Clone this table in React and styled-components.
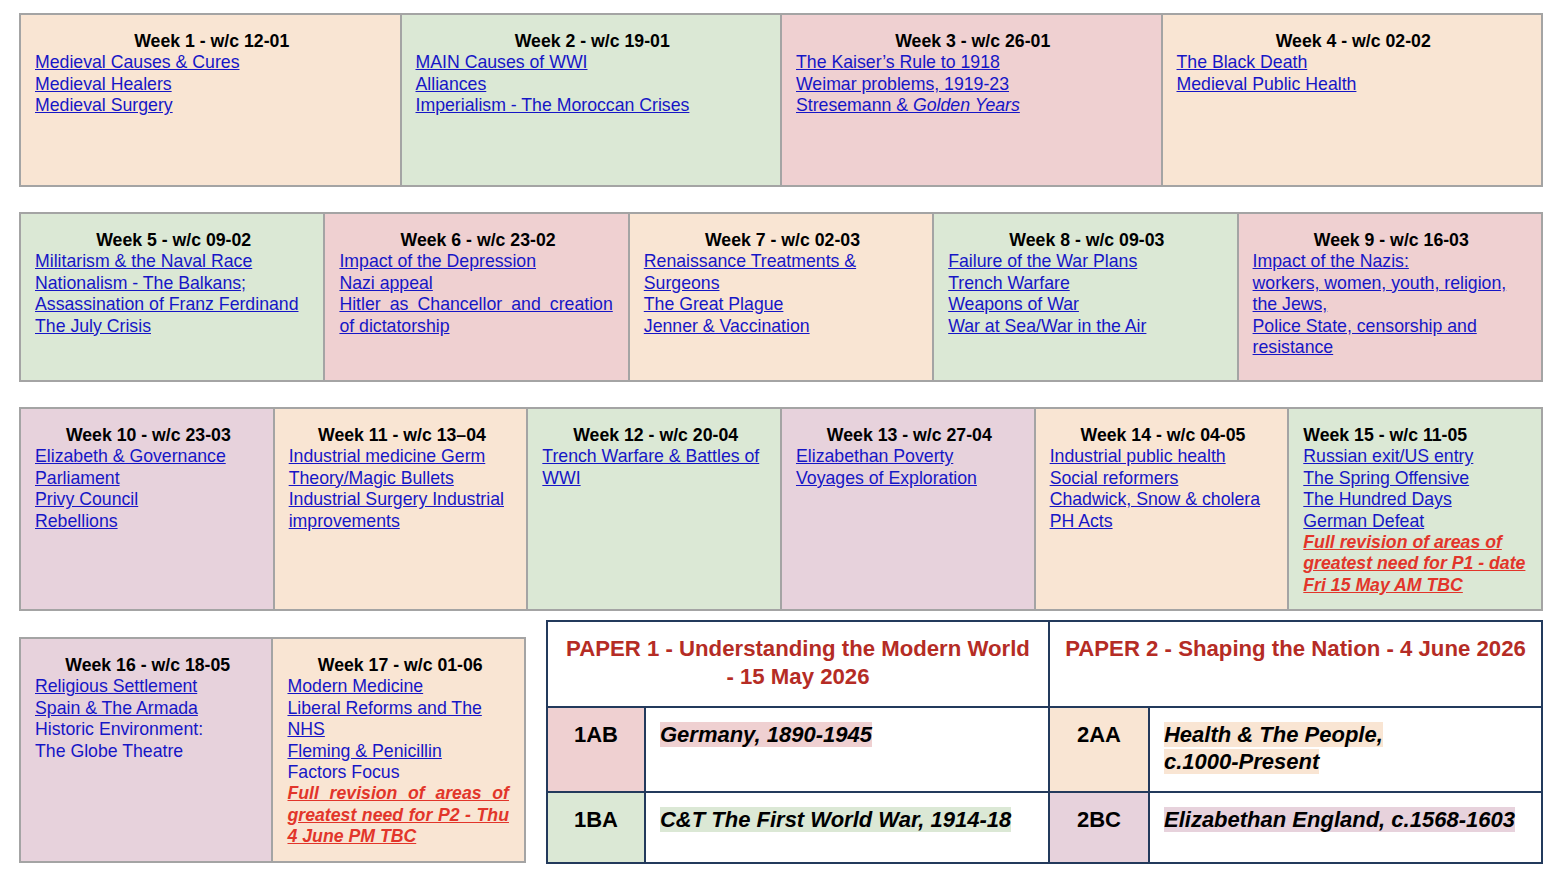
import React from "react";
import styled, { createGlobalStyle } from "styled-components";

const colours = {
  peach: "#f9e5d3",
  green: "#dbe8d5",
  pink: "#efd0d1",
  purple: "#e7d2dc",
  white: "#ffffff"
};

const GlobalStyle = createGlobalStyle`
  body {
    margin: 0;
    background: #ffffff;
    font-family: "Liberation Sans", Arial, sans-serif;
  }
`;

const Page = styled.div`
  width: 1524px;
  padding: 13px 0 0 19px;
`;

const WeekTable = styled.table`
  width: 100%;
  height: ${(p) => p.$height}px;
  border-collapse: collapse;
  table-layout: fixed;
  border: 2px solid #a4a4a4;
  margin-bottom: ${(p) => (p.$after === undefined ? 25 : p.$after)}px;
`;

const WeekCell = styled.td`
  vertical-align: top;
  background: ${(p) => colours[p.$bg]};
  border: 2px solid #a4a4a4;
  padding: 16px 11px 10px 14px;
  font-size: 17.7px;
  line-height: 21.4px;
`;

const Heading = styled.div`
  font-weight: bold;
  color: #000000;
  text-align: ${(p) => p.$align || "center"};
`;

const Topic = styled.a`
  display: block;
  color: ${(p) => (p.$alert ? "#e2352a" : "#1616c6")};
  text-decoration: ${(p) => (p.$plain ? "none" : "underline")};
  font-weight: ${(p) => (p.$alert ? "bold" : "normal")};
  font-style: ${(p) => (p.$alert ? "italic" : "normal")};
  text-align: ${(p) => (p.$justify ? "justify" : "left")};
  padding-right: ${(p) => (p.$justify ? 4 : 0)}px;
  cursor: pointer;
`;

const BottomRow = styled.div`
  display: flex;
  align-items: flex-end;
  gap: 20px;
`;

const SmallWeeks = styled(WeekTable)`
  width: 509px;
  margin-bottom: 1px;
`;

const PaperTable = styled.table`
  width: 995px;
  border-collapse: collapse;
  table-layout: fixed;
  border: 2px solid #233a5c;
`;

const PaperRow = styled.tr`
  height: ${(p) => p.$height}px;
`;

const PaperHead = styled.th`
  vertical-align: top;
  border: 2px solid #233a5c;
  padding: 13px 8px 0;
  color: #b52c25;
  font-size: 22.2px;
  line-height: 28px;
  font-weight: bold;
  text-align: center;
`;

const CodeCell = styled.td`
  vertical-align: top;
  border: 2px solid #233a5c;
  background: ${(p) => colours[p.$bg]};
  padding: 13px 4px 0;
  font-size: 22px;
  line-height: 27px;
  font-weight: bold;
  text-align: center;
  color: #000000;
`;

const TopicCell = styled.td`
  vertical-align: top;
  border: 2px solid #233a5c;
  padding: 13px 14px 0;
  font-size: 22px;
  line-height: 27px;
`;

const Highlight = styled.span`
  background: ${(p) => colours[p.$bg]};
  font-weight: bold;
  font-style: italic;
  color: #000000;
`;

const NoBreak = styled.span`
  white-space: nowrap;
`;

const rows = [
  {
    height: 174,
    weeks: [
      { title: "Week 1 - w/c 12-01", bg: "peach", topics: [{ text: "Medieval Causes & Cures" }, { text: "Medieval Healers" }, { text: "Medieval Surgery" }] },
      { title: "Week 2 - w/c 19-01", bg: "green", topics: [{ text: "MAIN Causes of WWI" }, { text: "Alliances" }, { text: "Imperialism - The Moroccan Crises" }] },
      {
        title: "Week 3 - w/c 26-01",
        bg: "pink",
        topics: [
          { text: "The Kaiser’s Rule to 1918" },
          { text: "Weimar problems, 1919-23" },
          { text: <>Stresemann &amp; <i>Golden Years</i></> }
        ]
      },
      { title: "Week 4 - w/c 02-02", bg: "peach", topics: [{ text: "The Black Death" }, { text: "Medieval Public Health" }] }
    ]
  },
  {
    height: 170,
    weeks: [
      {
        title: "Week 5 - w/c 09-02",
        bg: "green",
        topics: [
          { text: "Militarism & the Naval Race" },
          { text: "Nationalism - The Balkans;" },
          { text: "Assassination of Franz Ferdinand" },
          { text: "The July Crisis" }
        ]
      },
      {
        title: "Week 6 - w/c 23-02",
        bg: "pink",
        topics: [
          { text: "Impact of the Depression" },
          { text: "Nazi appeal" },
          { text: "Hitler as Chancellor and creation of dictatorship", justify: true }
        ]
      },
      {
        title: "Week 7 - w/c 02-03",
        bg: "peach",
        topics: [{ text: "Renaissance Treatments & Surgeons" }, { text: "The Great Plague" }, { text: "Jenner & Vaccination" }]
      },
      {
        title: "Week 8 - w/c 09-03",
        bg: "green",
        topics: [
          { text: "Failure of the War Plans" },
          { text: "Trench Warfare" },
          { text: "Weapons of War" },
          { text: "War at Sea/War in the Air" }
        ]
      },
      {
        title: "Week 9 - w/c 16-03",
        bg: "pink",
        topics: [
          { text: "Impact of the Nazis:" },
          { text: "workers, women, youth, religion, the Jews," },
          { text: "Police State, censorship and resistance" }
        ]
      }
    ]
  },
  {
    height: 204,
    after: 9,
    weeks: [
      {
        title: "Week 10 - w/c 23-03",
        bg: "purple",
        topics: [{ text: "Elizabeth & Governance" }, { text: "Parliament" }, { text: "Privy Council" }, { text: "Rebellions" }]
      },
      {
        title: "Week 11 - w/c 13–04",
        bg: "peach",
        topics: [{ text: "Industrial medicine Germ Theory/Magic Bullets" }, { text: "Industrial Surgery Industrial improvements" }]
      },
      { title: "Week 12 - w/c 20-04", bg: "green", topics: [{ text: "Trench Warfare & Battles of WWI" }] },
      { title: "Week 13 - w/c 27-04", bg: "purple", topics: [{ text: "Elizabethan Poverty" }, { text: "Voyages of Exploration" }] },
      {
        title: "Week 14 - w/c 04-05",
        bg: "peach",
        topics: [
          { text: "Industrial public health" },
          { text: "Social reformers" },
          { text: "Chadwick, Snow & cholera" },
          { text: "PH Acts" }
        ]
      },
      {
        title: "Week 15 - w/c 11-05",
        bg: "green",
        align: "left",
        topics: [
          { text: "Russian exit/US entry" },
          { text: "The Spring Offensive" },
          { text: "The Hundred Days" },
          { text: "German Defeat" },
          { text: "Full revision of areas of greatest need for P1 - date Fri 15 May AM TBC", alert: true }
        ]
      }
    ]
  }
];

const lastWeeks = [
  {
    title: "Week 16 - w/c 18-05",
    bg: "purple",
    topics: [
      { text: "Religious Settlement" },
      { text: "Spain & The Armada" },
      { text: "Historic Environment:", plain: true },
      { text: "The Globe Theatre", plain: true }
    ]
  },
  {
    title: "Week 17 - w/c 01-06",
    bg: "peach",
    topics: [
      { text: "Modern Medicine" },
      { text: "Liberal Reforms and The NHS" },
      { text: "Fleming & Penicillin" },
      { text: "Factors Focus", plain: true },
      { text: "Full revision of areas of greatest need for P2 - Thu 4 June PM TBC", alert: true, justify: true }
    ]
  }
];

const Week = ({ week }) => (
  <WeekCell $bg={week.bg}>
    <Heading $align={week.align}>{week.title}</Heading>
    {week.topics.map((topic, index) => (
      <Topic key={index} $plain={topic.plain} $alert={topic.alert} $justify={topic.justify}>
        {topic.text}
      </Topic>
    ))}
  </WeekCell>
);

const App = () => (
  <Page>
    <GlobalStyle />
    {rows.map((row, index) => (
      <WeekTable key={index} $height={row.height} $after={row.after}>
        <tbody>
          <tr>
            {row.weeks.map((week) => (
              <Week key={week.title} week={week} />
            ))}
          </tr>
        </tbody>
      </WeekTable>
    ))}
    <BottomRow>
      <SmallWeeks $height={226}>
        <tbody>
          <tr>
            {lastWeeks.map((week) => (
              <Week key={week.title} week={week} />
            ))}
          </tr>
        </tbody>
      </SmallWeeks>
      <PaperTable>
        <colgroup>
          <col style={{ width: 98 }} />
          <col style={{ width: 404 }} />
          <col style={{ width: 100 }} />
          <col style={{ width: 393 }} />
        </colgroup>
        <tbody>
          <PaperRow $height={86}>
            <PaperHead colSpan={2}>
              PAPER 1 - Understanding the Modern World <NoBreak>- 15 May 2026</NoBreak>
            </PaperHead>
            <PaperHead colSpan={2}>PAPER 2 - Shaping the Nation - 4 June 2026</PaperHead>
          </PaperRow>
          <PaperRow $height={85}>
            <CodeCell $bg="pink">1AB</CodeCell>
            <TopicCell>
              <Highlight $bg="pink">Germany, 1890-1945</Highlight>
            </TopicCell>
            <CodeCell $bg="peach">2AA</CodeCell>
            <TopicCell>
              <Highlight $bg="peach">
                Health &amp; The People, <NoBreak>c.1000-Present</NoBreak>
              </Highlight>
            </TopicCell>
          </PaperRow>
          <PaperRow $height={71}>
            <CodeCell $bg="green">1BA</CodeCell>
            <TopicCell>
              <Highlight $bg="green">C&amp;T The First World War, 1914-18</Highlight>
            </TopicCell>
            <CodeCell $bg="purple">2BC</CodeCell>
            <TopicCell>
              <Highlight $bg="purple">Elizabethan England, c.1568-1603</Highlight>
            </TopicCell>
          </PaperRow>
        </tbody>
      </PaperTable>
    </BottomRow>
  </Page>
);

export default App;
